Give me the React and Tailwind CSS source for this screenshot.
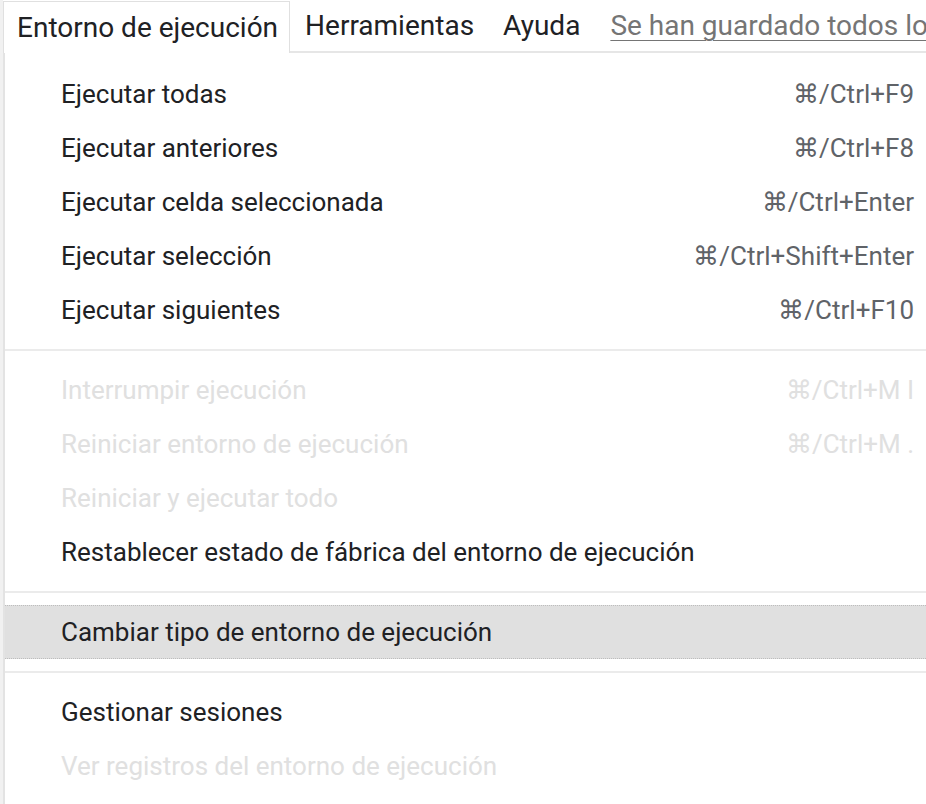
import React from 'react';

const groups = [
  [
    { label: 'Ejecutar todas', shortcut: '⌘/Ctrl+F9' },
    { label: 'Ejecutar anteriores', shortcut: '⌘/Ctrl+F8' },
    { label: 'Ejecutar celda seleccionada', shortcut: '⌘/Ctrl+Enter' },
    { label: 'Ejecutar selección', shortcut: '⌘/Ctrl+Shift+Enter' },
    { label: 'Ejecutar siguientes', shortcut: '⌘/Ctrl+F10' },
  ],
  [
    { label: 'Interrumpir ejecución', shortcut: '⌘/Ctrl+M I', disabled: true },
    { label: 'Reiniciar entorno de ejecución', shortcut: '⌘/Ctrl+M .', disabled: true },
    { label: 'Reiniciar y ejecutar todo', disabled: true },
    { label: 'Restablecer estado de fábrica del entorno de ejecución' },
  ],
  [{ label: 'Cambiar tipo de entorno de ejecución', active: true }],
  [
    { label: 'Gestionar sesiones' },
    { label: 'Ver registros del entorno de ejecución', disabled: true },
  ],
];

function MenuItem({ item }) {
  if (item.active) {
    return (
      <div className="flex h-[54px] items-center justify-between border-y border-dotted border-[#bdbdbd] bg-[#e0e0e0] pl-[56px] pr-3">
        <span className="text-[#202124]">{item.label}</span>
        {item.shortcut ? <span className="text-[#5f6368]">{item.shortcut}</span> : null}
      </div>
    );
  }
  return (
    <div className="flex h-[54px] items-center justify-between pl-[56px] pr-3">
      <span className={item.disabled ? 'text-[#e0e0e0]' : 'text-[#202124]'}>{item.label}</span>
      {item.shortcut ? (
        <span className={item.disabled ? 'text-[#e0e0e0]' : 'text-[#5f6368]'}>{item.shortcut}</span>
      ) : null}
    </div>
  );
}

export default function App() {
  return (
    <div className="flex h-[804px] w-[926px] overflow-hidden bg-white font-['Roboto',sans-serif]">
      <div className="w-[3px] shrink-0 bg-[#f1f1f1]" />
      <div className="flex min-w-0 flex-1 flex-col">
        <div className="flex h-[53px] shrink-0 items-end whitespace-nowrap text-[28px] leading-none">
          <div className="flex h-[52px] items-center self-end border-x border-t border-[#e0e0e0] bg-white pl-[13px] pr-[11px] text-[#202124]">
            Entorno de ejecución
          </div>
          <div className="flex h-[52px] min-w-0 flex-1 items-center gap-[29px] overflow-hidden border-b-2 border-[#e6e6e6] pl-[15px] text-[#202124]">
            <span>Herramientas</span>
            <span>Ayuda</span>
            <span className="ml-px text-[#757575] underline decoration-1 underline-offset-[5px]">Se han guardado todos los cambios</span>
          </div>
        </div>
        <div className="flex-1 border-l-2 border-[#e3e3e3] bg-white pt-[14px] text-[26px] whitespace-nowrap">
          {groups.map((group, gi) => (
            <div key={gi}>
              {gi > 0 ? (
                <div className="flex h-[26px] items-center">
                  <div className="h-[2px] w-full bg-[#ebebeb]" />
                </div>
              ) : null}
              {group.map((item) => (
                <MenuItem key={item.label} item={item} />
              ))}
            </div>
          ))}
        </div>
      </div>
    </div>
  );
}
